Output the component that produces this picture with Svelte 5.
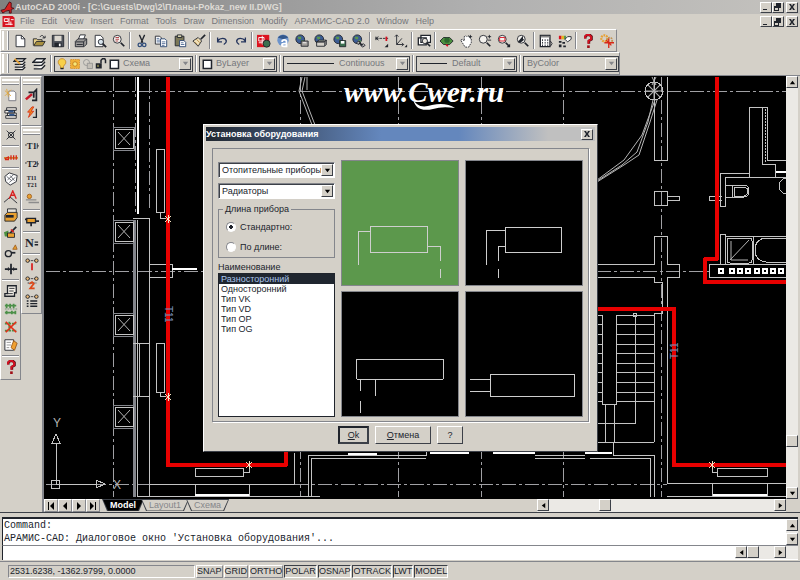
<script>
  const menu = [
    "File", "Edit", "View", "Insert", "Format", "Tools", "Draw",
    "Dimension", "Modify", "АРАМИС-CAD 2.0", "Window", "Help"
  ];

  const ink = "#20242c";
  const globe = `<circle cx="6" cy="6" r="5" fill="#3c5c94" stroke="${ink}"/><path d="M3 3h4v3H4zM7 7h3v2H7z" fill="#5c984c"/>`;
  const lens = `<path d="M10 10l4 4" stroke="${ink}" stroke-width="2"/><circle cx="6" cy="6" r="4.5" fill="#f4f2ee" stroke="${ink}"/>`;
  const nodes = `<path d="M4 3h8" stroke="${ink}" stroke-dasharray="2 1"/><circle cx="3" cy="3" r="2" fill="#e8b878" stroke="${ink}"/><circle cx="13" cy="3" r="2" fill="#e8b878" stroke="${ink}"/>`;
  const caption = (x, y, size, text) =>
    `<text x="${x}" y="${y}" font-size="${size}" font-family="Liberation Serif, serif" font-weight="bold" fill="${ink}">${text}</text>`;
  const question = `<path d="M5 5V3l2-2h3l2 2v3L9 8v3" fill="none" stroke="#5c1018" stroke-width="3"/><path d="M4.500 5V3l2-2h3l2 2v3l-3 2v3" fill="none" stroke="#d81020" stroke-width="2"/><rect x="7" y="13" width="3" height="3" fill="#a01018"/>`;

  const icons = {
    new: `<path d="M3.500 1.500h6l4 4v9h-10z" fill="#fff" stroke="${ink}"/><path d="M9.500 1.500v4h4" fill="none" stroke="${ink}"/>`,
    open: `<path d="M1.500 13V5.500h4l1 1h5V9" fill="#e8d088" stroke="${ink}"/><path d="M2 13.500l3-5h10l-3 5z" fill="#a89040" stroke="${ink}"/><path d="M9 3.500c2-3 4-2 5 1M12 4.500h3V2" fill="none" stroke="${ink}"/>`,
    save: `<path d="M1.500 1.500h13v13h-13z" fill="#50545c" stroke="${ink}"/><path d="M4 2h8v6H4z" fill="#dcd8d0"/><path d="M4 10h8v5H4z" fill="${ink}"/><path d="M9 11h2v3H9z" fill="#fff"/>`,
    print: `<path d="M5 6l2-5h6l-2 5" fill="#fff" stroke="${ink}"/><path d="M1.500 8.500l3-3h10v6l-3 3h-10z" fill="#9c9a98" stroke="${ink}"/><path d="M2 9h9v5M11 9l3-3M3 12h7" fill="none" stroke="${ink}"/>`,
    preview: `<path d="M2.500 1.500h6l3 3v10h-9z" fill="#fff" stroke="${ink}"/><circle cx="9" cy="9" r="3" fill="#d8e4ec" stroke="${ink}"/><path d="M11 11l4 4" stroke="${ink}" stroke-width="2"/>`,
    find: `${lens}<path d="M4 4h4M4 6h4M4 8h3" stroke="#a83038"/>`,
    cut: `<path d="M5 1l4 9M11 1L7 10" stroke="${ink}" stroke-width="1.500"/><circle cx="5.500" cy="12.500" r="2" fill="none" stroke="#34507c" stroke-width="1.500"/><circle cx="10.500" cy="12.500" r="2" fill="none" stroke="#34507c" stroke-width="1.500"/>`,
    copy: `<path d="M1.500 2.500h5l2 2v7h-7z" fill="#fff" stroke="${ink}"/><path d="M3 5h3M3 7h4M3 9h4" stroke="#4c6894"/><path d="M7.500 5.500h5l2 2v7h-7z" fill="#fff" stroke="#24406c"/><path d="M9 9h4M9 11h4M9 13h3" stroke="#4c6894"/>`,
    paste: `<path d="M2.500 2.500h10v11h-10z" fill="#7c7858" stroke="${ink}"/><path d="M5 1h5v3H5z" fill="#d8d4b0" stroke="${ink}"/><path d="M7.500 7.500h5l2 2v5h-7z" fill="#fff" stroke="#24406c"/><path d="M9 10h3M9 12h4" stroke="#4c6894"/>`,
    brush: `<path d="M15 1l-5 5" stroke="${ink}" stroke-width="2"/><path d="M7 4l4 4-4 6-6-6z" fill="#f0e0b8" stroke="${ink}"/><path d="M5 6l4 4M3 9l3 3" stroke="#b08840"/>`,
    undo: `<path d="M3 4v5h5M3 8c3-4 9-4 10 0 0 2-1 3-3 4" fill="none" stroke="#24345c" stroke-width="1.500"/>`,
    redo: `<path d="M13 4v5H8M13 8C10 4 4 4 3 8c0 2 1 3 3 4" fill="none" stroke="#24345c" stroke-width="1.500"/>`,
    today: `<path d="M0 1h14v14H0z" fill="#dc1420"/><path d="M2 4h6v4H2zM6 2v10M2 10h4" fill="none" stroke="#fff"/><circle cx="11" cy="11" r="4" fill="#3c7050" stroke="${ink}"/>`,
    point: `<circle cx="8" cy="7" r="6.500" fill="#6c94cc"/><path d="M2 4c3-4 9-4 12 0L8 6z" fill="#34588c"/><path d="M7 9c0-3 5-3 5 0v5H9c-3 0-3-3 0-3h3" fill="none" stroke="#fff" stroke-width="2"/>`,
    meet: `${globe}<path d="M7 8h8v6H7z" fill="#a4a09c" stroke="${ink}"/><path d="M9 10h4" stroke="#fff"/>`,
    publish: `${globe}<path d="M3 9l3-2h8l-2 2zM3 9h9v5H3z" fill="#d4d0c8" stroke="${ink}"/><path d="M12 9l2-2v5l-2 2" fill="#888" stroke="${ink}"/>`,
    transmit: `${globe}<path d="M7.500 7.500h7v7h-7z" fill="#3c7050" stroke="${ink}"/><path d="M9 8h4v3H9z" fill="#fff"/>`,
    link: `${globe}<path d="M5 10l3-2 2 2-3 2zM10 13l3-2 2 2-3 2z" fill="#bbb" stroke="${ink}"/><path d="M8 10l4 3" stroke="${ink}" stroke-width="2"/>`,
    track: `<path d="M1 5h14" stroke="${ink}" stroke-dasharray="3 1"/><path d="M1 3v4M4 3L1 5l3 2" fill="none" stroke="${ink}"/><path d="M13 3v5" stroke="#d81020" stroke-width="2"/><path d="M15 15h-4l4-4z" fill="${ink}"/>`,
    ucs: `<path d="M3 1v11h8M3 12l6-7M1 3l2-2 2 2M9 10l2 2-2 2" fill="none" stroke="${ink}"/><path d="M15 15h-3l3-3z" fill="${ink}"/>`,
    views: `<path d="M4.500 1.500h11v8h-11zM1.500 4.500h9v8h-9z" fill="#fff" stroke="${ink}" stroke-width="1.500"/><circle cx="9" cy="8" r="3" fill="#e8e4dc" stroke="${ink}"/><path d="M11 10l4 4" stroke="${ink}" stroke-width="2"/>`,
    orbit: `<path d="M0 8l4-4h7l4 4-4 4H4z" fill="#4c9040" stroke="${ink}"/><ellipse cx="8" cy="7" rx="3" ry="3" fill="#2c6830"/><path d="M7 12l2 2" stroke="#d81020" stroke-width="2"/>`,
    pan: `<path d="M2 7l2-1 2 2V3l2-1 1 1 2-1 1 2 2 1v5l-3 5H7z" fill="#fff" stroke="${ink}" stroke-dasharray="2 1"/><path d="M13 1v4M11 3h4" stroke="${ink}"/>`,
    zoom: `${lens}<path d="M11 3h4M13 1v4M11 7h4" stroke="${ink}"/>`,
    zoomwin: `${lens}<path d="M3 4h6v4H3z" fill="none" stroke="#d81020"/><path d="M15 15h-4l4-4z" fill="${ink}"/>`,
    zoomprev: `${lens}<path d="M2 9l6-7v4h2L5 10z" fill="${ink}"/>`,
    props: `<path d="M1.500 1.500h11v13h-11z" fill="#fff" stroke="${ink}" stroke-width="1.500"/><path d="M2 3h10" stroke="#888" stroke-width="2"/><path d="M4 6v8M7 6v8M10 6v8" stroke="${ink}" stroke-dasharray="2 1"/><path d="M13 8l2 3-2 3" fill="none" stroke="${ink}"/>`,
    center: `<path d="M1 2h3v4H1z" fill="#d81020"/><path d="M4 2h3v4H4z" fill="#e8b020"/><path d="M7 2h2v4H7z" fill="#4c9040"/><path d="M1 8h3v2H1zM5 9h3v2H5zM1 12h3v3H1zM6 13h3v2H6z" fill="${ink}"/><path d="M8 6l3-3h4v3l-4 3z" fill="#fff" stroke="${ink}"/>`,
    help: question,
    gears: `<circle cx="5" cy="5" r="3.500" fill="none" stroke="#e8a030" stroke-width="2.500" stroke-dasharray="2 1"/><circle cx="11" cy="7" r="3" fill="none" stroke="#c09050" stroke-width="2" stroke-dasharray="2 1"/><path d="M10 5v11M5 10h11M7 7l6 6" stroke="#d82818" stroke-width="1.500"/>`,
    layers: `<path d="M1 5l3-3h10l-3 3zM2 8.500h9l3-3M2 11.500h9l3-3M2 14.500h9l3-3" fill="#fff" stroke="${ink}" stroke-width="1.500"/><path d="M2 2l6 6" stroke="#e8a030" stroke-width="2"/>`,
    layer: `<path d="M1 6l4-4h10l-4 4zM2 9.500h9l4-4M2 13.500h9l4-4" fill="#fff" stroke="${ink}" stroke-width="1.500"/>`,
    bulb: `<path d="M6 14v-3L3 7V4l3-3h4l3 3v3l-3 4v3z" fill="#f8d048" stroke="#c08020"/><path d="M6 14h4" stroke="${ink}" stroke-width="2"/>`,
    sun: `<path d="M2 2h12v12H2z" fill="#f0b038" stroke="#d88818" stroke-dasharray="2 1"/><circle cx="8" cy="8" r="3" fill="#f8e878" stroke="#b87018"/>`,
    freeze: `<circle cx="6" cy="6" r="4" fill="#d4d0c8" stroke="#8c8c8c"/><path d="M7 7h7v7H7z" fill="#c4c0b8" stroke="#8c8c8c"/>`,
    lock: `<path d="M1 7h8v7H1z" fill="${ink}"/><path d="M8 7V3l2-2h3l1 2v4" fill="none" stroke="${ink}" stroke-width="2"/><path d="M3 9h2v3H3z" fill="#908c50"/>`,
    swatch: `<path d="M3 3h11v11H3z" fill="#fff" stroke="${ink}" stroke-width="2"/>`,
    sheet: `<path d="M5.500 3.500h6l2 2v9h-8z" fill="#fff" stroke="#707078"/><path d="M1 3l7 6M3 1l2 9M8 2L1 9" stroke="#e0a840"/>`,
    pages: `<path d="M3 2h11v3H3zM1 5h11v3H1zM4 8h10v3H4zM2 11h12v3H2z" fill="#f4f0e8" stroke="${ink}"/><path d="M5 6h6M6 10h6" stroke="#34588c" stroke-width="2"/>`,
    node: `<path d="M3 3l10 10M13 3L3 13" stroke="${ink}"/><circle cx="8" cy="8" r="3" fill="none" stroke="${ink}"/>`,
    dims: `<path d="M0 9h16" stroke="#c88830" stroke-width="2"/><path d="M1 11h4V8L1 10M8 11V6M11 11V6M14 11V6" fill="none" stroke="#d82818" stroke-width="1.500"/>`,
    hatch: `<path d="M1 5l5-4 9 3-1 7-7 4-5-4z" fill="#fff" stroke="${ink}"/><path d="M4 9l7-6M6 12l7-6M3 5l6 5M7 4l5 6" stroke="#60646c"/>`,
    text: `<path d="M0 14l7-6" stroke="${ink}"/><path d="M6 10l4-9 4 9M8 6h5" fill="none" stroke="#d82020" stroke-width="1.500"/><path d="M7 8l8 7" stroke="${ink}"/>`,
    printer: `<path d="M4 5V1h10v5" fill="#e8e4dc" stroke="${ink}"/><path d="M1 8l3-3h11v6l-3 4H1z" fill="#e8a030" stroke="${ink}"/><path d="M2 8h9v3H2z" fill="${ink}"/>`,
    tool: `<path d="M14 1L7 8" stroke="${ink}" stroke-width="2"/><path d="M0 7l5-2v7H1z" fill="#4c9040"/><path d="M4 8h8v5H4z" fill="#e8a030" stroke="${ink}"/><path d="M8 4l3 3" stroke="#d82020" stroke-width="2"/>`,
    sensor: `<circle cx="5" cy="11" r="3.500" fill="none" stroke="${ink}" stroke-width="1.500"/><path d="M8 10h5" stroke="${ink}" stroke-width="2"/><path d="M13 1l2 5h-5z" fill="#e8a030" stroke="#a06020"/>`,
    cross: `<path d="M1 8h14M8 2v12" stroke="${ink}" stroke-width="2"/><path d="M5 6v4M11 6v4" stroke="${ink}"/>`,
    list: `<path d="M4 2h10v8h-2v4H1v-3h3z" fill="#f4f0e8" stroke="${ink}" stroke-width="1.500"/><path d="M6 5h6M6 8h5M4 11h6" stroke="${ink}"/>`,
    pipes: `<path d="M1 4h13M1 12h13M3 2v5M7 2v5M11 2v5M3 10v4M9 10v4M13 10v4" stroke="#4c9048" stroke-width="2"/><path d="M1 8h14" stroke="#708870" stroke-dasharray="2 1"/>`,
    nopipes: `<path d="M1 4h13M1 12h13M6 2v12" stroke="#4c9048" stroke-width="2" stroke-dasharray="3 1"/><path d="M2 2l12 12M14 2L2 14" stroke="#e03018" stroke-width="2"/>`,
    note: `<path d="M1 2h10v12H1z" fill="#fff" stroke="${ink}"/><path d="M3 5h5M3 8h5M3 11h3" stroke="#8c8c8c"/><path d="M8 11l3-8 4 3-3 8z" fill="#f0a030" stroke="#985818"/>`,
    arrow: `<path d="M1 13L8 7" stroke="#c81828" stroke-width="3"/><path d="M4 5h6v6M9 6l4-4v12h-5" fill="none" stroke="${ink}" stroke-width="2"/>`,
    bolt: `<path d="M8 1L3 7h3l-2 6 6-7H7l3-5z" fill="#f09020" stroke="#d83018"/><path d="M13 3v10H9" fill="none" stroke="${ink}" stroke-width="1.500"/>`,
    t1: `<path d="M0 8h2M14 6v6M14 9h2" stroke="${ink}"/>` + caption(2, 12, 10, "T1"),
    t2: `<path d="M0 8h2M14 6v6M14 9h2" stroke="${ink}"/>` + caption(2, 12, 10, "T2"),
    t12: caption(2, 7, 7, "T11") + caption(2, 15, 7, "T21"),
    level: `<circle cx="5" cy="5" r="2.500" fill="#e8a030" stroke="#a06020"/><path d="M1 9h12M4 12h12" stroke="#8c8c8c" stroke-width="1.500"/>`,
    valve: `<path d="M2 5h10v5H2z" fill="#e8a030" stroke="${ink}" stroke-width="1.500"/><path d="M12 8h4M7 10v4M0 6h2" stroke="${ink}" stroke-width="2"/>`,
    number: caption(0, 13, 14, "N") + `<path d="M11 7h4M11 10h4" stroke="${ink}" stroke-width="1.500"/>`,
    n1: `${nodes}<path d="M8 6v8" stroke="#d82020" stroke-width="2"/>`,
    n2: `${nodes}<path d="M3 8h10" stroke="${ink}" stroke-dasharray="2 1"/><path d="M5 9l3-2 2 2-4 5h5" fill="none" stroke="#e04818" stroke-width="2"/>`,
    n3: `${nodes}<path d="M6 8h8M6 11h8M6 14h8M2 8h2M2 11h2M2 14h2" stroke="${ink}" stroke-width="1.500"/>`
  };

  const standard = [
    ["new", "open", "save"],
    ["print", "preview", "find"],
    ["cut", "copy", "paste", "brush"],
    ["undo", "redo"],
    ["today", "point", "meet", "publish", "transmit", "link"],
    ["track", "ucs"],
    ["views"],
    ["orbit", "pan", "zoom", "zoomwin", "zoomprev"],
    ["props", "center"],
    ["help", "gears"]
  ];
  const outer = [
    ["sheet", "pages"],
    ["node"],
    ["dims"],
    ["hatch", "text", "printer", "tool", "sensor", "cross"],
    ["list", "pipes", "nopipes", "note"],
    ["help"]
  ];
  const innerTop = [["arrow", "bolt"]];
  const innerBottom = [["t1", "t2", "t12", "level"], ["valve"], ["number"], ["n1", "n2", "n3"]];

  const columns = [127, 220, 313, 405];
  const steps = [315, 324, 334, 344, 353, 363, 372, 382, 392, 401];
  const vents = [719, 730, 738, 746, 755, 763, 771, 779];
  const markers = [[168, 219], [168, 397], [249, 465], [712, 465]];
  const spokes = [0, 45, 90, 135];

  const previews = [
    { name: "Разносторонний", d: "M29 66h58v27h-58zM29 71h-12v34M87 86h13v15M100 109v9" },
    { name: "Односторонний", d: "M40 67h57v26h-57zM40 70h-19v35M40 86h-7v15M33 109v9" },
    { name: "Тип VK", d: "M15 68h88v20h-88zM19 88v12M19 110v13M34 88v17" },
    { name: "Тип VD", d: "M25 83h85v23h-85zM4 88h21M4 101h21" }
  ];
  const types = ["Разносторонний", "Односторонний", "Тип VK", "Тип VD", "Тип OP", "Тип OG"];

  const modes = [
    { name: "SNAP", on: false }, { name: "GRID", on: false }, { name: "ORTHO", on: false },
    { name: "POLAR", on: true }, { name: "OSNAP", on: true }, { name: "OTRACK", on: true },
    { name: "LWT", on: true }, { name: "MODEL", on: true }
  ];

  let selected = types[0];
  let length = "standard";
  let command = "";
</script>

{#snippet icon(name)}
  <svg class="icon" viewBox="0 0 16 16" aria-hidden="true">{@html icons[name]}</svg>
{/snippet}

{#snippet group(items)}
  {#each items as set, i}
    {#if i > 0}<span class="sep"></span>{/if}
    {#each set as name}
      <button class="tool" aria-label={name}>{@render icon(name)}</button>
    {/each}
  {/each}
{/snippet}

{#snippet windowButtons()}
  <div class="window-buttons">
    <button class="mini" aria-label="Minimize"><svg viewBox="0 0 10 8"><path d="M2 6h4v1H2z" /></svg></button>
    <button class="mini" aria-label="Restore"><svg viewBox="0 0 10 8"><path d="M3 0h5v5H6V3H3zM1 3h5v5H1zM2 5v2h3V5z" fill-rule="evenodd" /></svg></button>
    <button class="mini last" aria-label="Close"><svg viewBox="0 0 10 8"><path d="M2 1h2l1 2 1-2h2L6 4l2 3H6L5 5 4 7H2l2-3z" /></svg></button>
  </div>
{/snippet}

{#snippet arrow(dir)}
  <svg class="arrow {dir}" viewBox="0 0 8 8" aria-hidden="true"><path d="M1 2h6L4 6z" /></svg>
{/snippet}

<div class="app">
  <header class="titlebar">
    <svg class="logo" viewBox="0 0 16 14"><path d="M1 10l4-1 5-8 2 1v5l3 1-3 1v4h-2v-3l-4 1-3 2z" fill="#d82020" stroke="#501018" /></svg>
    <h1>AutoCAD 2000i - [C:\Guests\Dwg\2\Планы-Pokaz_new II.DWG]</h1>
    {@render windowButtons()}
  </header>

  <nav class="menubar">
    <svg class="logo" viewBox="0 0 14 14"><path d="M0 1h11l2 2v10H0z" fill="#d81420" /><path d="M2 4h4v3H2zM7 3v7M9 5h3M3 10h8M9 7v4" fill="none" stroke="#fff" /></svg>
    {#each menu as item}
      <button class="menu-item">{item}</button>
    {/each}
    {@render windowButtons()}
  </nav>

  <div class="toolbar standard">
    <span class="grip"></span>
    {@render group(standard)}
  </div>

  <div class="toolbar properties">
    <span class="grip"></span>
    <button class="tool" aria-label="layers">{@render icon("layers")}</button>
    <button class="tool" aria-label="layer">{@render icon("layer")}</button>
    <span class="sep"></span>
    <div class="combo flat layer">
      {@render icon("bulb")}{@render icon("sun")}{@render icon("freeze")}{@render icon("lock")}{@render icon("swatch")}
      <select aria-label="Layer"><option>Схема</option></select>
      <span class="drop">{@render arrow("down")}</span>
    </div>
    <span class="sep"></span>
    <div class="combo flat color">
      {@render icon("swatch")}
      <select aria-label="Color"><option>ByLayer</option></select>
      <span class="drop">{@render arrow("down")}</span>
    </div>
    <span class="sep"></span>
    <div class="combo flat linetype">
      <span class="line"></span>
      <select aria-label="Linetype"><option>Continuous</option></select>
      <span class="drop">{@render arrow("down")}</span>
    </div>
    <span class="sep"></span>
    <div class="combo flat weight">
      <span class="line short"></span>
      <select aria-label="Lineweight"><option>Default</option></select>
      <span class="drop">{@render arrow("down")}</span>
    </div>
    <span class="sep"></span>
    <div class="combo flat plot">
      <select aria-label="Plot style"><option>ByColor</option></select>
      <span class="drop">{@render arrow("down")}</span>
    </div>
  </div>

  <main>
    <div class="side">
      <div class="palette">
        <span class="grip"></span>
        {@render group(outer)}
      </div>
    </div>
    <div class="side">
      <div class="palette">
        <span class="grip"></span>
        {@render group(innerTop)}
      </div>
      <div class="palette">
        <span class="grip"></span>
        {@render group(innerBottom)}
      </div>
    </div>

    <div class="document">
      <div class="view">
        <div class="canvas">
          <svg class="drawing" aria-label="Чертёж">
            <g transform="translate(-44 -76)">
              <!-- axes -->
              <g class="axis">
                <path d="M46 91H1600M46 271H203M597 271H709M46 484H149M295 484H667" />
                <path d="M113 77V497M135 77V214M300 77V497M398 77V497M481 77V497M563 77V497M661 77V497M149 79V208" />
              </g>

              <!-- left wall -->
              <path class="wall bold" d="M138 77V214" />
              <path class="wall grey" d="M134 220V497" />
              <path class="wall" d="M137 220V497M133 218H149V497M149 264H172V277H149M133 343H149M133 396H149M139 343V396" />
              <path class="wall bold" d="M172 269H197" />
              <path class="wall" d="M149 484H294V453M137 496H320M195 484V497M249 484V497" />
              <path class="wall bold" d="M195 495H249" />
              {#each columns as y}
                <rect class="grey" x="113" y={y} width="21" height="23" />
                <rect x="115" y={y + 2} width="18" height="19" />
                <path class="thin" d="M118 {y + 5}l12 13M130 {y + 5}l-12 13" />
              {/each}

              <!-- radiators -->
              <path d="M156 149H164V212H156zM160 212V218H168M156 343H164V392H156zM160 392V396H168" />
              <path d="M195 468H243V476H195zM243 472H249V465M717 468H767V476H717zM717 472H712V465" />

              <!-- bottom wall -->
              <path d="M308 497V455H426V452M311 497V458H426M535 455H585M535 458H585M613 455H654V497M590 458H650V497" />
              <path class="wall bold" d="M348 454H377M430 453H469M493 453H535M585 453H612" />

              <!-- door leaf, top -->
              <path class="thin" d="M302 77L299 91 312 125M305 77L302 91 315 125M307 77V90" />

              <!-- stair column and curved partition -->
              <path d="M654 77V160H667V77M654 191H667V205H654zM667 196H679V200H667M722 196H709V200H722" />
              <path d="M597 264H654V236H667V264H679V277H667V483M597 277H654V282H662V313H654V442" />
              <circle cx="654" cy="91" r="9" />
              {#each spokes as angle}
                <path class="thin" d="M645 91H663" transform="rotate({angle} 654 91)" />
              {/each}
              <path class="thin" d="M652 77l4 8M656 77l-4 8M653 100L648 122 637 152 622 165 597 181M657 100L650 122 639 155 624 165 597 182M655 100L642 135 624 160 597 180" />

              <!-- bathroom -->
              <path d="M749 177V107H767V160H1600M762 107V164H775V177M720 173H749M720 173V206H725V177H1600" />
              <path class="dots" d="M765 109V162" />
              <path class="wall bold" d="M776 172H1600" />
              <path d="M726 185H744Q749 185 749 191Q749 197 744 197H726M732 185V197M734 187H744Q748 188 748 191Q748 195 744 196H734z" />
              <ellipse cx="787" cy="186" rx="8" ry="8" />
              <path d="M720 264V234H725V264M726 236H1600M753 236V264M1600 264H709V277H1600" />
              <rect x="727" y="238" width="25" height="25" rx="3" />
              <path class="thin" d="M730 260L749 240M731 241V260H748" />
              <rect x="755" y="238" width="60" height="24" rx="11" />
              {#each vents as x}
                <rect class="vent" x={x} y="269" width="4" height="4" />
              {/each}

              <!-- stairs -->
              {#each steps as y}
                <path class="step" d="M597 {y}H602M616 {y}H654" />
              {/each}
              <path d="M602 315V404H616V315M635 315V423H597M605 404V442M614 404V442M597 442H654M613 442V455" />
              <circle cx="635" cy="315" r="2" />
              <path d="M667 483H1600M712 483V497M767 483V497M667 496H1600" />
              <path class="wall bold" d="M713 495H767" />

              <!-- heating pipe -->
              <path class="pipe" d="M168 77V465H286V440M717 77V259H705V282H1600M590 309H674V465H1600" />
              {#each markers as [x, y]}
                <path class="marker" d="M{x - 3} {y - 3}l6 6M{x + 3} {y - 3}l-6 6M{x} {y - 4}v8" />
              {/each}
              <text class="tag" transform="translate(165 306) rotate(90)">T11</text>
              <text class="tag" transform="translate(678 359) rotate(-90)">T11</text>

              <!-- UCS icon -->
              <g class="ucs">
                <path d="M51 480H59V488H51zM56 484V443M52 443H60L56 434zM56 484H96M96 480V488L105 484z" />
                <text x="53" y="427">Y</text>
                <text x="113" y="489">X</text>
              </g>

              <text class="mark" x="344" y="102">www.Cwer.ru</text>
              <path class="swash" d="M413 98Q417 110 432 105Q446 102 455 108Q442 106 433 109Q415 113 413 98z" />
            </g>
          </svg>

          <section class="dialog" role="dialog" aria-label="Установка оборудования">
            <header class="dialog-title">
              <h2>Установка оборудования</h2>
              <button class="mini" aria-label="Закрыть"><svg viewBox="0 0 10 8"><path d="M2 1h2l1 2 1-2h2L6 4l2 3H6L5 5 4 7H2l2-3z" /></svg></button>
            </header>
            <div class="panel">
              <div class="form">
                <div class="combo">
                  <select aria-label="Раздел"><option>Отопительные приборы</option></select>
                  <span class="drop">{@render arrow("down")}</span>
                </div>
                <div class="combo">
                  <select aria-label="Прибор"><option>Радиаторы</option></select>
                  <span class="drop">{@render arrow("down")}</span>
                </div>
                <fieldset>
                  <legend>Длина прибора</legend>
                  <label><input type="radio" bind:group={length} value="standard" />Стандартно:</label>
                  <label><input type="radio" bind:group={length} value="custom" />По длине:</label>
                </fieldset>
                <label class="caption" for="types">Наименование</label>
                <select id="types" class="list" size="6" bind:value={selected}>
                  {#each types as type}
                    <option value={type}>{type}</option>
                  {/each}
                </select>
              </div>
              <div class="previews">
                {#each previews as preview}
                  <button
                    class="preview"
                    class:active={preview.name === selected}
                    aria-label={preview.name}
                    on:click={() => (selected = preview.name)}>
                    <svg viewBox="0 0 118 125"><path d={preview.d} /></svg>
                  </button>
                {/each}
              </div>
            </div>
            <footer>
              <button class="push ok"><u>O</u>k</button>
              <button class="push cancel"><u>О</u>тмена</button>
              <button class="push">?</button>
            </footer>
          </section>
        </div>
        <div class="scroll vertical">
          <button class="scroll-button" aria-label="Up">{@render arrow("up")}</button>
          <span class="before"></span>
          <span class="thumb"></span>
          <span class="after"></span>
          <button class="scroll-button" aria-label="Down">{@render arrow("down")}</button>
        </div>
      </div>

      <div class="tabs">
        <button class="nav" aria-label="First"><svg viewBox="0 0 8 8"><path d="M1 0h1v8H1zM7 0v8L3 4z" /></svg></button>
        <button class="nav" aria-label="Previous"><svg viewBox="0 0 8 8"><path d="M6 0v8L2 4z" /></svg></button>
        <button class="nav" aria-label="Next"><svg viewBox="0 0 8 8"><path d="M2 0v8l4-4z" /></svg></button>
        <button class="nav" aria-label="Last"><svg viewBox="0 0 8 8"><path d="M6 0h1v8H6zM1 0v8l4-4z" /></svg></button>
        <button class="tab active"><span>Model</span></button>
        <button class="tab"><span>Layout1</span></button>
        <button class="tab"><span>Схема</span></button>
        <div class="scroll horizontal">
          <button class="scroll-button" aria-label="Left">{@render arrow("left")}</button>
          <span class="before"></span>
          <span class="thumb"></span>
          <span class="after"></span>
          <button class="scroll-button" aria-label="Right">{@render arrow("right")}</button>
        </div>
      </div>
    </div>
  </main>

  <section class="console">
    <div class="log-row">
      <div class="log">
        <p>Command:</p>
        <p>АРАМИС-CAD: Диалоговое окно 'Установка оборудования'...</p>
      </div>
      <div class="scroll vertical">
        <button class="scroll-button" aria-label="Up">{@render arrow("up")}</button>
        <button class="scroll-button" aria-label="Down">{@render arrow("down")}</button>
      </div>
    </div>
    <div class="prompt-row">
      <input class="prompt" aria-label="Command" bind:value={command} />
      <div class="scroll horizontal">
        <button class="scroll-button" aria-label="Left">{@render arrow("left")}</button>
        <span class="thumb"></span>
        <span class="after"></span>
        <button class="scroll-button" aria-label="Right">{@render arrow("right")}</button>
      </div>
    </div>
  </section>

  <footer class="status">
    <output>2531.6238, -1362.9799, 0.0000</output>
    {#each modes as mode}
      <button class="mode" class:on={mode.on}>{mode.name}</button>
    {/each}
  </footer>
</div>

<style>
  :global(body) {
    margin: 0;
    overflow: hidden;
  }
  .app {
    --face: #d4d0c8;
    --shadow: #84868c;
    --dark: #3c4048;
    --ink: #20242c;
    display: flex;
    flex-direction: column;
    height: 100vh;
    background: var(--face);
    color: var(--ink);
    font: 9px/11px "Liberation Sans", Arial, sans-serif;
  }
  .app * {
    box-sizing: border-box;
  }
  button,
  select,
  input {
    font: inherit;
    color: inherit;
    margin: 0;
    padding: 0;
    border: 0;
    border-radius: 0;
    background: none;
    outline: none;
  }
  svg {
    display: block;
    flex: none;
  }
  h1,
  h2,
  p {
    margin: 0;
    font-size: inherit;
    white-space: nowrap;
  }

  .titlebar {
    display: flex;
    align-items: center;
    height: 14px;
    background: linear-gradient(90deg, #808080, #b0b0b0 60%, #c4c2be);
    color: #dedbd5;
  }
  .logo {
    width: 15px;
    height: 13px;
  }
  .window-buttons {
    display: flex;
    margin-left: auto;
    padding-right: 2px;
  }
  .mini {
    display: grid;
    place-items: center;
    width: 12px;
    height: 11px;
    background: var(--face);
    border: 1px solid;
    border-color: #fff var(--dark) var(--dark) #fff;
  }
  .mini.last {
    margin-left: 2px;
  }
  .mini svg {
    width: 10px;
    height: 8px;
    fill: var(--ink);
  }

  .menubar {
    display: flex;
    align-items: center;
    height: 15px;
    padding-left: 2px;
  }
  .menubar .logo {
    width: 14px;
  }
  .menu-item {
    padding: 0 3px 0 4px;
    color: #75777c;
    white-space: nowrap;
  }

  .toolbar {
    display: flex;
    align-items: center;
    align-self: flex-start;
    height: 23px;
    border: 1px solid;
    border-color: #fff var(--shadow) var(--shadow) #fff;
  }
  .toolbar .grip {
    width: 6px;
    height: 19px;
    margin: 0 2px 0 1px;
    border: solid #fff;
    border-width: 0 1px 0 2px;
    box-shadow: 1px 0 var(--shadow);
  }
  .tool {
    display: grid;
    place-items: center;
    width: 19px;
    height: 18px;
  }
  .icon {
    width: 14px;
    height: 14px;
  }
  .toolbar .sep {
    width: 2px;
    height: 17px;
    margin: 0 1px;
    border-left: 1px solid var(--shadow);
    border-right: 1px solid #fff;
  }
  .properties .sep {
    margin: 0 2px;
  }

  .combo {
    display: flex;
    align-items: center;
    height: 16px;
    background: #fff;
    border: 1px solid;
    border-color: var(--shadow) #fff #fff var(--shadow);
    box-shadow: inset 1px 1px var(--dark);
  }
  .combo select {
    flex: 1;
    min-width: 0;
    height: 14px;
    padding-left: 3px;
    appearance: none;
  }
  .combo .drop {
    display: grid;
    place-items: center;
    width: 12px;
    height: 12px;
    margin-right: 1px;
    background: var(--face);
    border: 1px solid;
    border-color: #fff var(--dark) var(--dark) #fff;
  }
  .combo.flat {
    background: var(--face);
    border-color: var(--dark);
    color: #75777c;
    box-shadow: none;
  }
  .combo.flat .icon {
    width: 12px;
    height: 12px;
    margin-left: 1px;
  }
  .layer {
    width: 139px;
  }
  .color {
    width: 78px;
  }
  .linetype {
    width: 127px;
  }
  .weight {
    width: 101px;
  }
  .plot {
    width: 96px;
  }
  .line {
    width: 47px;
    height: 1px;
    margin: 0 2px 0 3px;
    background: var(--ink);
  }
  .line.short {
    width: 27px;
  }
  .arrow {
    width: 7px;
    height: 7px;
  }
  .flat .arrow {
    fill: #85868a;
  }
  .arrow.up {
    transform: rotate(180deg);
  }
  .arrow.left {
    transform: rotate(90deg);
  }
  .arrow.right {
    transform: rotate(-90deg);
  }

  main {
    flex: 1;
    display: flex;
    min-height: 0;
    border-top: 1px solid var(--shadow);
  }
  .side {
    width: 21px;
  }
  .palette {
    display: flex;
    flex-direction: column;
    align-items: center;
    padding: 2px 0 3px;
    border: 1px solid;
    border-color: #fff var(--shadow) var(--shadow) #fff;
  }
  .palette .grip {
    align-self: stretch;
    height: 5px;
    margin: 0 1px 2px;
    border: solid #fff;
    border-width: 2px 0 1px;
    box-shadow: 0 1px var(--shadow);
  }
  .palette .sep {
    align-self: stretch;
    height: 2px;
    margin: 1px;
    border-top: 1px solid var(--shadow);
    border-bottom: 1px solid #fff;
  }

  .document {
    flex: 1;
    display: flex;
    flex-direction: column;
    min-width: 0;
    padding-right: 2px;
    border-left: 2px solid var(--shadow);
  }
  .view {
    flex: 1;
    display: flex;
    min-height: 0;
  }
  .canvas {
    position: relative;
    flex: 1;
    min-width: 0;
    overflow: hidden;
    background: #000;
  }
  .drawing {
    width: 100%;
    height: 100%;
    fill: none;
    stroke: #c4c4c4;
    shape-rendering: crispEdges;
  }
  .drawing .axis {
    stroke: #a0a0a4;
    stroke-dasharray: 14 3 3 3;
  }
  .drawing .bold {
    stroke: #fff;
    stroke-width: 2;
  }
  .drawing .grey {
    stroke: #84868c;
  }
  .drawing .wall.grey {
    stroke-width: 3;
  }
  .drawing .thin {
    stroke: #b4b4b4;
    shape-rendering: auto;
  }
  .drawing .dots {
    stroke-dasharray: 2 1;
  }
  .drawing .vent {
    stroke: #fff;
    stroke-width: 2;
  }
  .drawing .pipe {
    stroke: #e80000;
    stroke-width: 4;
    stroke-linejoin: round;
  }
  .drawing .marker {
    stroke: #f0e0c0;
  }
  .drawing text {
    stroke: none;
  }
  .tag {
    fill: #7890b4;
    font-size: 10px;
  }
  .ucs text {
    fill: #b4b4b4;
    font-size: 12px;
  }
  .mark {
    fill: #fff;
    font: italic bold 29px "Liberation Serif", serif;
  }
  .drawing .swash {
    fill: #fff;
    stroke: none;
    shape-rendering: auto;
  }

  .scroll {
    display: flex;
    background: #ebe9e5;
  }
  .scroll.vertical {
    flex-direction: column;
    justify-content: space-between;
    width: 12px;
  }
  .scroll-button,
  .thumb {
    display: grid;
    place-items: center;
    width: 12px;
    height: 12px;
    background: var(--face);
    border: 1px solid;
    border-color: #fff var(--dark) var(--dark) #fff;
  }
  .vertical .before {
    flex: 346;
  }
  .vertical .after {
    flex: 40;
  }

  .dialog {
    position: absolute;
    left: 159px;
    top: 48px;
    width: 395px;
    padding: 2px;
    background: var(--face);
    border: 1px solid;
    border-color: #fff var(--dark) var(--dark) #fff;
  }
  .dialog-title {
    display: flex;
    align-items: center;
    justify-content: space-between;
    height: 14px;
    padding-right: 2px;
    background: linear-gradient(90deg, #20262f, #6487bd 45%, #6487bd 65%, #c0c0c0 88%);
    color: #fff;
  }
  .panel {
    display: flex;
    gap: 6px;
    margin: 7px 6px 0;
    padding: 11px 5px 4px;
    border: 1px solid var(--shadow);
    box-shadow: 1px 1px #fff;
  }
  .form {
    display: flex;
    flex-direction: column;
    width: 117px;
    padding-top: 2px;
  }
  .form .combo {
    margin-bottom: 5px;
  }
  fieldset {
    display: flex;
    flex-direction: column;
    gap: 8px;
    height: 54px;
    margin: 0;
    padding: 6px 0 0 7px;
    border: 1px solid var(--shadow);
  }
  legend {
    margin-left: -3px;
    padding: 0 2px;
  }
  fieldset label {
    display: flex;
    align-items: center;
    gap: 4px;
    height: 12px;
  }
  input[type="radio"] {
    appearance: none;
    width: 10px;
    height: 10px;
    border: 1px solid;
    border-color: var(--shadow) #fff #fff var(--shadow);
    border-radius: 50%;
    background: #fff;
  }
  input[type="radio"]:checked {
    background: radial-gradient(circle, var(--ink) 2px, #fff 2px);
  }
  .caption {
    margin-top: 4px;
  }
  .list {
    flex: 1;
    min-height: 0;
    overflow: hidden;
    background: #fff;
    border: 1px solid var(--ink);
  }
  .list option {
    min-height: 0;
    padding: 0 2px;
    line-height: 10px;
  }
  .list option:checked {
    background: #20262f linear-gradient(#20262f, #20262f);
    color: #a8c4ec;
  }
  .previews {
    display: grid;
    grid-template-columns: 1fr 1fr;
    gap: 5px 6px;
    flex: 1;
  }
  .preview {
    height: 126px;
    background: #000;
    border: 1px solid var(--shadow);
  }
  .preview.active {
    background: #5c984c;
  }
  .preview svg {
    width: 100%;
    height: 100%;
    fill: none;
    stroke: #d0d0d0;
    shape-rendering: crispEdges;
  }
  .dialog footer {
    display: flex;
    justify-content: center;
    gap: 6px;
    padding: 4px 0 5px;
  }
  .push {
    width: 26px;
    height: 18px;
    border: 1px solid;
    border-color: #fff var(--dark) var(--dark) #fff;
  }
  .push.ok {
    width: 31px;
    border: 2px solid;
    border-color: var(--ink) var(--dark) var(--dark) var(--ink);
  }
  .push.cancel {
    width: 56px;
  }

  .tabs {
    display: flex;
    height: 13px;
  }
  .nav {
    display: grid;
    place-items: center;
    width: 14px;
    border: 1px solid;
    border-color: #fff var(--shadow) var(--shadow) #fff;
  }
  .nav svg {
    width: 8px;
    height: 8px;
    fill: #000;
  }
  .tab {
    height: 12px;
    margin-left: 2px;
    margin-right: -5px;
    background: var(--dark);
    clip-path: polygon(0 0, 100% 0, calc(100% - 5px) 100%, 5px 100%);
    color: #85868a;
  }
  .tab span {
    display: block;
    height: 11px;
    margin: 0 1px;
    padding: 0 7px;
    background: var(--face);
    clip-path: polygon(0 0, 100% 0, calc(100% - 5px) 100%, 5px 100%);
    line-height: 11px;
  }
  .tab.active {
    color: #fff;
    font-weight: bold;
  }
  .tab.active span {
    background: #000;
  }
  .tabs .horizontal {
    width: 249px;
    margin-left: auto;
    margin-right: 12px;
  }
  .tabs .before {
    flex: 50;
  }
  .tabs .after {
    flex: 163;
  }

  .console {
    border-top: 1px solid var(--dark);
    padding: 4px 2px 1px;
  }
  .log-row {
    display: flex;
    height: 28px;
    background: #fff;
    border: solid var(--ink);
    border-width: 2px 0 0 1px;
  }
  .log {
    flex: 1;
    padding-left: 1px;
    font: 10px/13px "Liberation Mono", monospace;
  }
  .prompt-row {
    display: flex;
    height: 15px;
    border-top: 1px solid var(--shadow);
    border-left: 1px solid var(--ink);
    background: #fff;
  }
  .prompt {
    flex: 1;
    font: 10px/13px "Liberation Mono", monospace;
  }
  .prompt-row .scroll {
    width: 63px;
    height: 13px;
    padding-right: 12px;
  }
  .prompt-row .after {
    flex: 1;
  }

  .status {
    display: flex;
    align-items: center;
    height: 19px;
    padding: 0 8px;
    border-top: 1px solid var(--shadow);
  }
  .status output {
    width: 187px;
    height: 13px;
    padding-left: 1px;
    border: 1px solid;
    border-color: var(--shadow) #fff #fff var(--shadow);
  }
  .mode {
    height: 13px;
    margin-left: 1px;
    border: 1px solid;
    border-color: #fff var(--shadow) var(--shadow) #fff;
  }
  .mode.on {
    border-color: var(--dark) #fff #fff var(--dark);
  }
</style>
